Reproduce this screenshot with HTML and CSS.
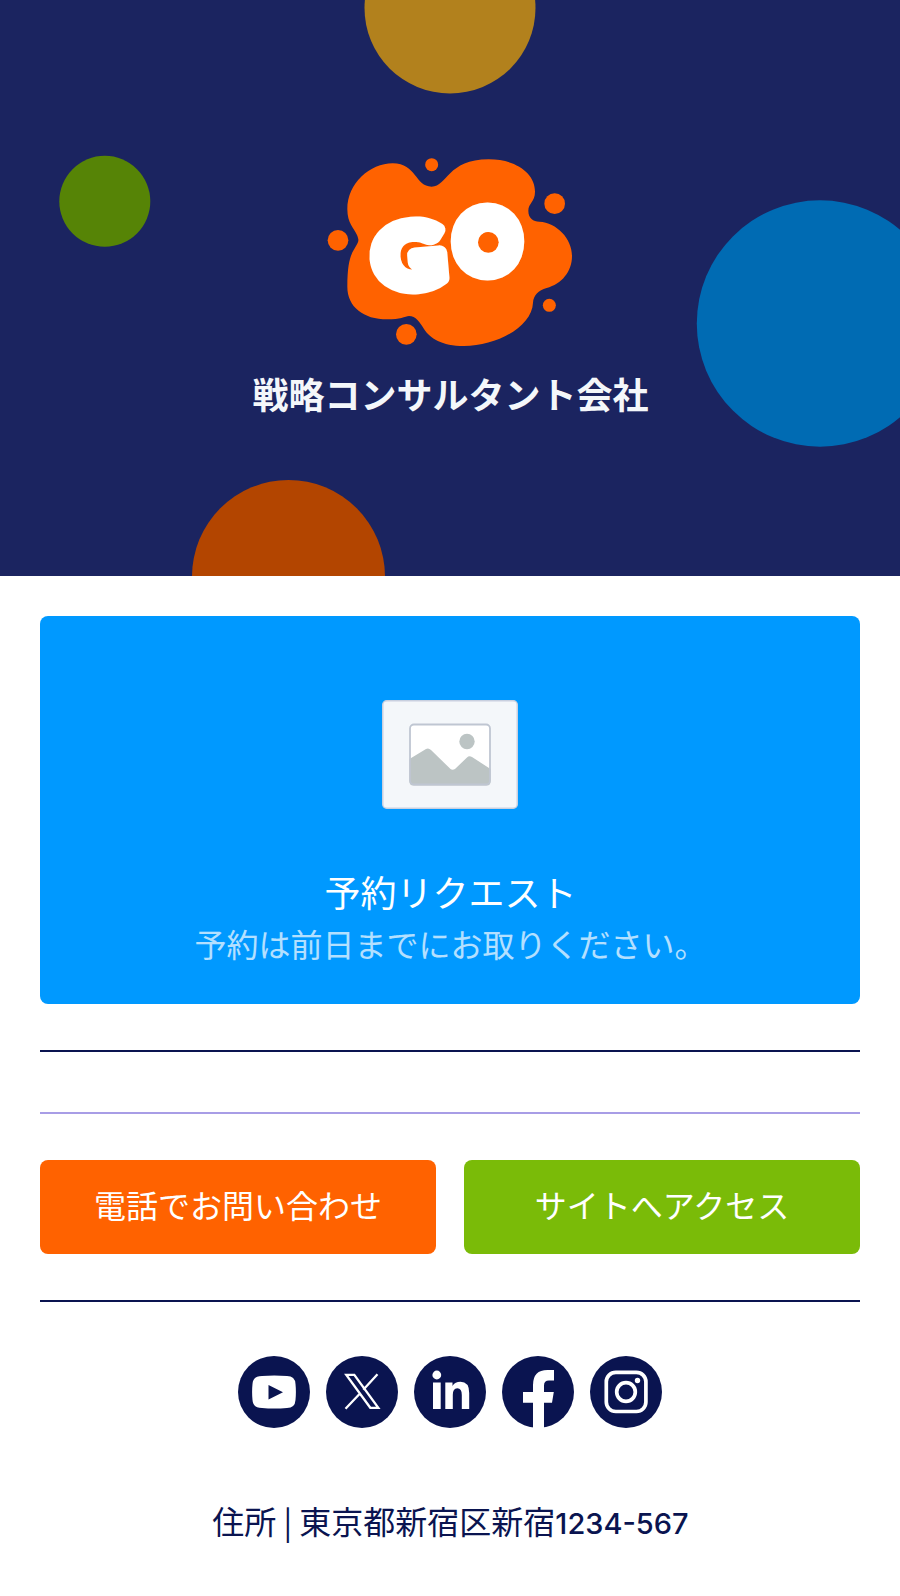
FILE: index.html
```html
<!DOCTYPE html>
<html lang="ja">
<head>
    <meta charset="UTF-8">
    <meta name="viewport" content="width=device-width, initial-scale=1.0">
    <title>戦略コンサルタント会社</title>
    <link rel="stylesheet" href="styles.css">
</head>
<body>

    <!-- Hero -->
    <header class="hero">
        <svg class="hero-bg" viewBox="0 0 900 576">
            <circle cx="450" cy="8" r="85.5" fill="#b2811d"/>
            <circle cx="104.8" cy="201.3" r="45.5" fill="#568406"/>
            <circle cx="820" cy="323.5" r="123.2" fill="#006bb3"/>
            <circle cx="288.5" cy="576.5" r="96.5" fill="#b34500"/>
        </svg>
        <svg class="logo" viewBox="0 0 840 660">
            <g fill="#ff6200">
                <path d="M112 208C112 130 180 70 248 70C320 70 315 140 365 140C412 140 412 58 536 58C618 58 675 100 675 155C675 185 655 190 655 212C655 235 670 244 688 245C740 248 786 295 786 348C786 395 755 432 710 444C685 451 670 467 669 488C666 560 560 618 462 618C395 618 360 595 342 567C330 547 317 528 297 528C285 530 270 538 232 538C160 538 112 500 112 440C112 345 130 335 141 313C147 302 146 298 141 285C132 265 112 250 112 208Z"/>
                <circle cx="365" cy="74" r="19.5"/>
                <circle cx="734" cy="191" r="31"/>
                <circle cx="84" cy="301" r="31"/>
                <circle cx="718" cy="496" r="19.5"/>
                <circle cx="289" cy="583" r="31"/>
            </g>
            <g class="logo-text">
                <text class="logo-g" transform="translate(202 449) rotate(-5) scale(1.12 1)">G</text>
                <text class="logo-o" transform="translate(443 391) scale(0.95 1)">O</text>
            </g>
            <circle cx="535" cy="307" r="31" fill="#ff6200"/>
        </svg>
        <h1>戦略コンサルタント会社</h1>
    </header>

    <main class="content">
        <!-- Booking card -->
        <a class="card" href="#">
            <svg class="card-image" viewBox="0 0 136 109">
                <rect x="0.75" y="0.75" width="134.5" height="107.5" rx="4" fill="#f4f7fa" stroke="#c9d0df" stroke-width="1.5"/>
                <rect x="28" y="24.5" width="80" height="60" rx="4" fill="#fff"/>
                <path d="M27.5 59L44 49Q46.500 47.5 49 50L68.5 69Q70.500 70.5 73 69L85 57.5Q87 55.5 90 57L108.5 69V81.5Q108.5 85.5 105 85.5H31Q27.500 85.5 27.5 81.5Z" fill="#bcc4c4"/>
                <rect x="28" y="24.5" width="80" height="60" rx="4" fill="none" stroke="#bfc6d2" stroke-width="1.8"/>
                <circle cx="85" cy="41.5" r="7.7" fill="#bcc4c4"/>
            </svg>
            <span class="card-title">予約リクエスト</span>
            <span class="card-text">予約は前日までにお取りください。</span>
        </a>

        <hr class="line">
        <hr class="line line-light">

        <div class="buttons">
            <a class="btn btn-orange" href="#">電話でお問い合わせ</a>
            <a class="btn btn-green" href="#">サイトへアクセス</a>
        </div>

        <hr class="line line-social">

        <!-- Social links -->
        <div class="social">
            <svg viewBox="0 0 72 72">
                <circle cx="36" cy="36" r="36"/>
                <path class="w" d="M24 20Q36 19 49 20Q57 20 57.5 28Q58.3 36 57.5 44Q57 52 49 52Q36 53 24 52Q15 52 14.5 44Q13.7 36 14.5 28Q15 20 24 20Z"/>
                <path d="M30.5 29V43.5L45 36.2Z"/>
            </svg>
            <svg viewBox="0 0 72 72">
                <circle cx="36" cy="36" r="36"/>
                <path class="x" d="M20.3 18.9H28.3L52.3 51.8H44.3ZM51.5 18.3L37.3 33.8M33.5 38L19.5 52.7"/>
            </svg>
            <svg viewBox="0 0 72 72">
                <circle cx="36" cy="36" r="36"/>
                <circle class="w" cx="22.8" cy="19" r="4.4"/>
                <path class="w" d="M19 26.5H26.7V53H19ZM31.3 26.5H38.5V30Q41 25.8 46.5 25.8Q55.2 25.8 55.2 37V53H47.8V39Q47.8 32.3 43.3 32.3Q38.8 32.3 38.8 39V53H31.3Z"/>
            </svg>
            <svg viewBox="0 0 72 72">
                <circle cx="36" cy="36" r="36"/>
                <path class="w" d="M31 72V46.7H21V36H31V29Q31 14 45.5 14H52V24.5H47Q42 24.5 42 29.5V36H51.8L50 46.7H42V72Z"/>
            </svg>
            <svg viewBox="0 0 72 72">
                <circle cx="36" cy="36" r="36"/>
                <rect class="ring" x="16.3" y="16.3" width="39.6" height="39.2" rx="9.5"/>
                <circle class="ring" cx="36" cy="36" r="9.3"/>
                <circle class="w" cx="47.5" cy="24.5" r="2.7"/>
            </svg>
        </div>

        <p class="address">住所 | 東京都新宿区新宿<span class="num">1234-567</span></p>
    </main>

</body>
</html>
```
FILE: styles.css
```css
* {
    box-sizing: border-box;
}

body {
    margin: 0;
    background: #fff;
    color: #0a1450;
    font-family: "Noto Sans CJK JP", sans-serif;
}

.hero {
    position: relative;
    height: 576px;
    padding-top: 140px;
    background: #1b2460;
    text-align: center;
    overflow: hidden;
}

.hero-bg {
    position: absolute;
    inset: 0;
    width: 100%;
    height: 100%;
}

.logo {
    position: relative;
    display: block;
    width: 280px;
    height: 220px;
    margin: 0 auto;
}

.logo-text {
    fill: #fff;
    stroke: #fff;
    stroke-linejoin: round;
    stroke-linecap: round;
    font-family: Lato, sans-serif;
    font-weight: 900;
}

.logo-g {
    font-size: 256px;
    stroke-width: 44px;
}

.logo-o {
    font-size: 232px;
    stroke-width: 60px;
}

.hero h1 {
    position: relative;
    margin: 0;
    padding-left: 1px;
    color: #f4f7fa;
    font-size: 36px;
    line-height: 66px;
    font-weight: 700;
}

.content {
    padding: 40px;
}

.card {
    display: flex;
    flex-direction: column;
    align-items: center;
    height: 388px;
    padding-top: 84px;
    border-radius: 8px;
    background: #0099ff;
    color: #fff;
    text-decoration: none;
}

.card-image {
    width: 136px;
    height: 109px;
    margin-bottom: 56px;
}

.card-title {
    padding-left: 1px;
    font-size: 36px;
    line-height: 52px;
}

.card-text {
    padding-left: 1px;
    font-size: 32px;
    line-height: 52px;
    opacity: 0.7;
}

.line {
    height: 2px;
    margin: 46px 0 60px;
    border: none;
    background: #0a1450;
}

.line-light {
    margin: 60px 0 46px;
    background: #a89de6;
}

.line-social {
    margin-bottom: 54px;
}

.buttons {
    display: grid;
    grid-template-columns: 1fr 1fr;
    gap: 28px;
}

.btn {
    height: 94px;
    border-radius: 8px;
    color: #fff;
    font-size: 32px;
    line-height: 88px;
    text-align: center;
    text-decoration: none;
}

.btn-orange {
    background: #ff6200;
}

.btn-green {
    background: #7abb08;
}

.social {
    display: flex;
    justify-content: center;
    gap: 16px;
    fill: #0a1450;
}

.social svg {
    width: 72px;
    height: 72px;
}

.social .w {
    fill: #fff;
}

.social .x {
    fill: none;
    stroke: #fff;
    stroke-width: 2.3px;
}

.social .ring {
    fill: none;
    stroke: #fff;
    stroke-width: 3.7px;
}

.address {
    margin: 69px 0 0;
    padding-left: 1px;
    font-size: 32px;
    line-height: 46px;
    text-align: center;
    white-space: nowrap;
}

.num {
    font-family: Inter, sans-serif;
    font-size: 29px;
    font-weight: 500;
}
```
